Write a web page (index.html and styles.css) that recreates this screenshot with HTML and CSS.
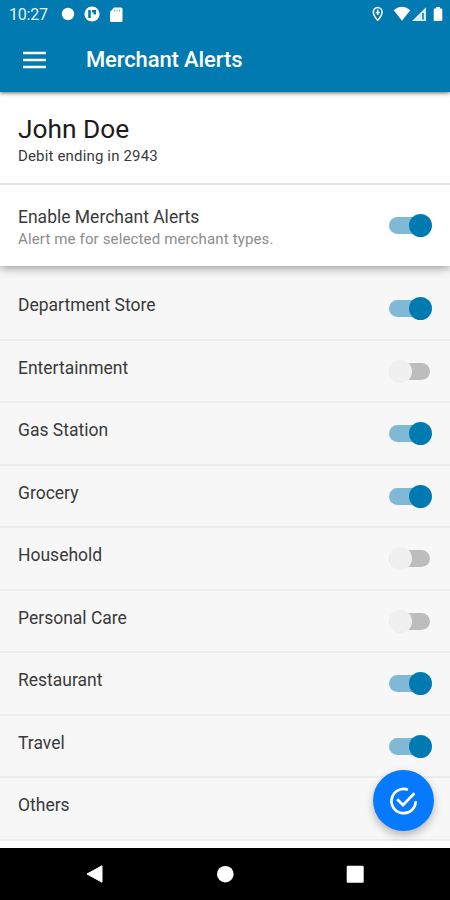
FILE: index.html
```html
<!DOCTYPE html>
<html lang="en">
<head>
    <meta charset="UTF-8">
    <meta name="viewport" content="width=device-width, initial-scale=1.0">
    <title>Merchant Alerts</title>
    <link rel="stylesheet" href="styles.css">
</head>
<body>
    <div class="app">
        <header class="header">
            <div class="status-bar">
                <span class="clock">10:27</span>
                <svg class="status-left" width="64" height="18" viewBox="0 0 64 18" fill="#fff">
                    <circle cx="8" cy="9" r="6.2"/>
                    <circle cx="32" cy="9" r="7.6"/>
                    <path d="M28.200 5h2.600v8h-2.600zM32 5h4v4.500h-2.500V7.500H32z" fill="#007ab1"/>
                    <path d="M54 2.500h7q1.500 0 1.500 1.500v11.500q0 1.500-1.500 1.500h-9.500q-1.500 0-1.500-1.500V7z"/>
                    <path d="M54.500 4.500v2M57 4.500v2M59.500 4.500v2" stroke="#007ab1" stroke-width=".6"/>
                </svg>
                <svg class="status-right" width="74" height="18" viewBox="0 0 74 18" fill="#fff">
                    <path d="M7.700 2.500a4.400 4.400 0 0 0-4.400 4.400c0 3.600 4.400 8.300 4.400 8.300s4.400-4.700 4.400-8.300a4.400 4.400 0 0 0-4.400-4.400z" fill="none" stroke="#fff" stroke-width="1.500"/>
                    <path d="M7.700 4.500v5.500M5.700 7.500h4" stroke="#fff" stroke-width="1.500"/>
                    <path d="M23.700 5.200Q32-1.600 40.300 5.200L32 15.800z"/>
                    <path d="M56 2.200V16H42z" opacity=".85"/>
                    <path d="M53 8v6.500" stroke="#007ab1" stroke-width="1.500"/>
                    <path d="M66 2h4v1.500h1.300q1 0 1 1V15q0 1-1 1h-6.600q-1 0-1-1V4.500q0-1 1-1H66z"/>
                </svg>
            </div>
            <div class="toolbar">
                <svg class="menu-icon" role="button" aria-label="Menu" width="24" height="18" viewBox="0 0 24 18">
                    <path d="M0 2h23M0 9h23M0 16h23" stroke="#fff" stroke-width="2.500"/>
                </svg>
                <h1>Merchant Alerts</h1>
            </div>
        </header>

        <section class="account">
            <div class="account-name">John Doe</div>
            <div class="account-card">Debit ending in 2943</div>
        </section>

        <section class="enable">
            <div class="enable-text">
                <div class="enable-title">Enable Merchant Alerts</div>
                <div class="enable-note">Alert me for selected merchant types.</div>
            </div>
            <div class="toggle on" role="switch" aria-checked="true"></div>
        </section>

        <main class="merchant-list">
            <div class="merchant-item"><span>Department Store</span><div class="toggle on" role="switch" aria-checked="true"></div></div>
            <div class="merchant-item"><span>Entertainment</span><div class="toggle" role="switch" aria-checked="false"></div></div>
            <div class="merchant-item"><span>Gas Station</span><div class="toggle on" role="switch" aria-checked="true"></div></div>
            <div class="merchant-item"><span>Grocery</span><div class="toggle on" role="switch" aria-checked="true"></div></div>
            <div class="merchant-item"><span>Household</span><div class="toggle" role="switch" aria-checked="false"></div></div>
            <div class="merchant-item"><span>Personal Care</span><div class="toggle" role="switch" aria-checked="false"></div></div>
            <div class="merchant-item"><span>Restaurant</span><div class="toggle on" role="switch" aria-checked="true"></div></div>
            <div class="merchant-item"><span>Travel</span><div class="toggle on" role="switch" aria-checked="true"></div></div>
            <div class="merchant-item"><span>Others</span></div>
        </main>

        <nav class="nav-bar">
            <svg width="18" height="20" viewBox="0 0 18 20"><path d="M1 10L16 1.800v16.400z" fill="#fff" stroke="#fff" stroke-linejoin="round"/></svg>
            <svg width="18" height="20" viewBox="0 0 18 20"><circle cx="9.300" cy="10.200" r="8.300" fill="#fff"/></svg>
            <svg width="18" height="20" viewBox="0 0 18 20"><rect x=".7" y="1.700" width="17" height="17" rx="1.200" fill="#fff"/></svg>
        </nav>

        <button class="save-button" aria-label="Save">
            <svg width="30" height="30" viewBox="0 0 30 30" fill="none" stroke="#fff" stroke-width="2.700">
                <path d="M18.900 3.800A12.100 12.100 0 1 0 26.700 15.200"/>
                <path d="M8.200 13.200l5.800 5.800L25.500 7.300"/>
            </svg>
        </button>
    </div>
</body>
</html>
```
FILE: styles.css
```css
:root {
    --primary: #007ab1;
    --primary-light: #7fb9d6;
    --bg-color: #f7f7f7;
    --text-color: #3a3a3a;
    --border-color: #ececec;
}

* {
    box-sizing: border-box;
}

body {
    margin: 0;
    font-family: Roboto, "Liberation Sans", sans-serif;
    color: var(--text-color);
    background: #fff;
}

.app {
    position: relative;
    display: flex;
    flex-direction: column;
    width: 450px;
    height: 900px;
    overflow: hidden;
}

.header {
    position: relative;
    z-index: 2;
    height: 92px;
    background: var(--primary);
    color: #fff;
    box-shadow: 0 1px 4px rgba(0, 0, 0, 0.6);
}

.status-bar {
    display: flex;
    align-items: center;
    height: 28px;
    padding: 0 6px 0 9px;
}

.clock {
    width: 51px;
    font-size: 16px;
    letter-spacing: -0.2px;
    opacity: 0.9;
}

.status-right {
    margin-left: auto;
}

.toolbar {
    display: flex;
    align-items: center;
    height: 63px;
    padding-left: 23px;
}

.toolbar h1 {
    margin: 0 0 0 39px;
    font-size: 22px;
    font-weight: 500;
    line-height: 26px;
    letter-spacing: -0.12px;
}

.account {
    position: relative;
    z-index: 1;
    height: 93px;
    padding: 20px 18px 0;
    border-bottom: 2px solid #e3e3e3;
    background: #fff;
}

.account-name {
    font-size: 26.3px;
    line-height: 34px;
    color: #1c1c1c;
}

.account-card {
    font-size: 15px;
    line-height: 20px;
    letter-spacing: 0.16px;
}

.enable {
    position: relative;
    display: flex;
    justify-content: space-between;
    align-items: center;
    height: 81px;
    padding: 0 18px;
    background: #fff;
    box-shadow: 0 2px 9px rgba(0, 0, 0, 0.4);
}

.enable-text {
    padding-top: 4px;
}

.enable-title {
    font-size: 17.5px;
    line-height: 22px;
}

.enable-note {
    font-size: 15px;
    line-height: 22px;
    letter-spacing: 0.14px;
    color: #8c8c8c;
}

.merchant-list {
    height: 575px;
    padding-top: 12px;
    background: var(--bg-color);
}

.merchant-item {
    display: flex;
    justify-content: space-between;
    height: 62.5px;
    padding: 16px 18px 0;
    border-bottom: 2px solid var(--border-color);
    font-size: 17.5px;
    line-height: 22px;
}

.toggle {
    display: flex;
    align-items: center;
    width: 41px;
    height: 17px;
    margin-right: 2px;
    border-radius: 9px;
    background: #bdbdbd;
}

.merchant-item .toggle {
    margin-top: 6px;
}

.toggle::after {
    content: "";
    flex: none;
    width: 23px;
    height: 23px;
    border-radius: 50%;
    background: #f0f0f0;
}

.toggle.on {
    background: var(--primary-light);
}

.toggle.on::after {
    margin-left: 20px;
    background: var(--primary);
}

.nav-bar {
    display: flex;
    justify-content: space-between;
    align-items: center;
    height: 52px;
    margin-top: auto;
    padding: 0 86px;
    background: #000;
}

/* floats over the end of the list */
.save-button {
    position: absolute;
    right: 16px;
    bottom: 69px;
    display: flex;
    align-items: center;
    justify-content: center;
    width: 61px;
    height: 61px;
    padding: 0;
    border: none;
    border-radius: 50%;
    background: #067aff;
    box-shadow: 0 4px 9px rgba(0, 0, 0, 0.27);
}
```
